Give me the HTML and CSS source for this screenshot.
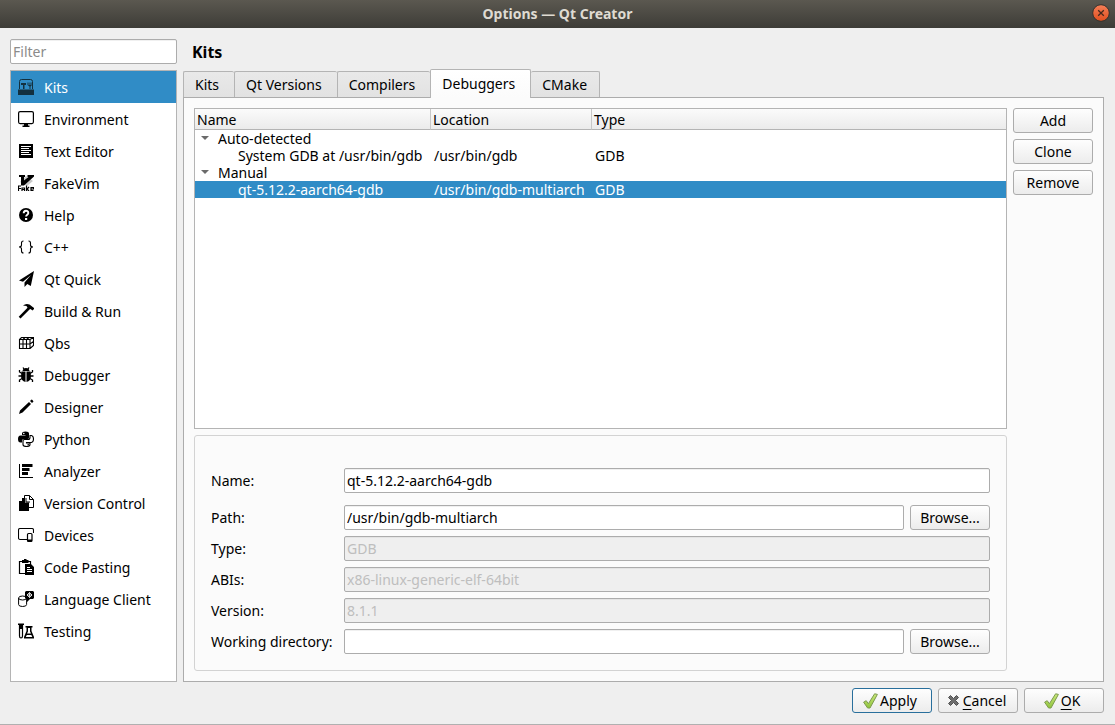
FILE: index.html
```html
<!DOCTYPE html>
<html lang="en">
<head>
<meta charset="utf-8">
<title>Options — Qt Creator</title>
<link rel="stylesheet" href="styles.css">
</head>
<body>
<header class="titlebar">
  <h1 class="titlebar-text">Options — Qt Creator</h1>
  <button class="close" type="button" aria-label="Close">
    <svg width="18" height="18" viewBox="0 0 18 18">
      <defs><linearGradient id="closeFill" x1="0" y1="0" x2="0" y2="1"><stop offset="0" stop-color="#f47f58"/><stop offset="1" stop-color="#e04e1e"/></linearGradient></defs>
      <circle cx="9" cy="9" r="8.300" fill="url(#closeFill)" stroke="#33322d"/>
      <path d="M6.200 6.200l5.600 5.600M11.800 6.200l-5.600 5.600" stroke="#46281c" stroke-width="1.300"/>
    </svg>
  </button>
</header>

<div class="dialog">
  <div class="content">
    <aside class="sidebar">
      <input class="field" type="text" placeholder="Filter" aria-label="Filter">
      <nav class="categories" aria-label="Categories">
        <button class="category selected" type="button">
          <svg class="icon" viewBox="0 0 16 16"><path d="M1.500 10V2.500q0-2 2-2h9q2 0 2 2V10" fill="none" stroke="#13303f"/><path d="M0 10.500h16V16H0zM3 4h5v2H6.500v4H5V6H3zM9.500 3.500h1V6h1V3.500h1V6h1V3.500h.5V6L12.500 7.500V10h-1V7.500L9.500 6z" fill="#13303f"/></svg>
          Kits</button>
        <button class="category" type="button">
          <svg class="icon" viewBox="0 0 16 16"><rect x=".6" y=".6" width="14.800" height="12" rx="1.500" fill="none" stroke="#000" stroke-width="1.200"/><path d="M6 13h4v1.500h1.500V16h-7v-1.500H6z"/></svg>
          Environment</button>
        <button class="category" type="button">
          <svg class="icon" viewBox="0 0 16 16"><path d="M1 1h14v14H1z"/><path d="M3 3.500h10M3 5.500h8M3 7.500h10M3 9.500h8M3 11.500h10" stroke="#fff"/></svg>
          Text Editor</button>
        <button class="category" type="button">
          <svg class="icon" viewBox="0 0 16 16"><path d="M8 1l7 5-6 5-7-4z" fill="#c9c9c9"/><path d="M1 0h6v2H6v3.500L10.500 2H9.500V0H16v1.500L6 10.500H3V2H1z"/><path d="M.5 16v-5H3M.5 13.500H3M4 16v-3h2.500v3M4 14.500h2.500M8.500 10.500V16M11 12l-2 2 2 2M15.500 15.500H13v-3h2.500V14H13" fill="none" stroke="#000" stroke-width="1.200"/></svg>
          FakeVim</button>
        <button class="category" type="button">
          <svg class="icon" viewBox="0 0 16 16"><circle cx="8" cy="8" r="7"/><path d="M5.700 6.200C5.700 3 10.300 3 10.300 6c0 1.700-2.200 1.700-2.200 3.600" fill="none" stroke="#fff" stroke-width="1.900"/><path d="M7 11h2.200v2H7z" fill="#fff"/></svg>
          Help</button>
        <button class="category" type="button">
          <svg class="icon" viewBox="0 0 16 16"><path d="M5.500 2Q3.500 2 3.500 4v2Q3.500 8 1 8q2.500 0 2.500 2v2q0 2 2 2M10.500 2q2 0 2 2v2q0 2 2.500 2-2.500 0-2.500 2v2q0 2-2 2" fill="none" stroke="#000" stroke-width="1.100"/></svg>
          C++</button>
        <button class="category" type="button">
          <svg class="icon" viewBox="0 0 16 16"><path d="M16 0L1 9.500l4 1.300L13 4 6.500 11.500V16l2.800-3 3.500 2z"/></svg>
          Qt Quick</button>
        <button class="category" type="button">
          <svg class="icon" viewBox="0 0 16 16"><path d="M5 2.500Q8 0 11.500 1.500L16 5v1l-1.500 1.500L12.500 6l-1 .500L2.500 15.500.7 13.700 9.500 4.700 8.500 3z"/></svg>
          Build &amp; Run</button>
        <button class="category" type="button">
          <svg class="icon" viewBox="0 0 16 16"><path d="M1.500 4.500H12v9H1.500zM1.500 4.500l2-2h12L12 4.500M15.500 2.500v8L12 13.500M5 4.500v9M8.500 4.500v9M1.500 9H12l3.500-2.500M5 4.500l2-2M8.500 4.500l2.500-2" fill="none" stroke="#000" stroke-width="1.100"/></svg>
          Qbs</button>
        <button class="category" type="button">
          <svg class="icon" viewBox="0 0 16 16"><path d="M4.500 4Q5 1 8 1t3.500 3zM3.500 4.500h4V15Q3 14 3 9zM8.500 4.500h4L13 9q0 5-4.500 6z"/><path d="M4 6.500L1.500 5V3M3.500 9H.5M4 11.500L1.500 13v2M12 6.500L14.500 5V3M12.500 9h3M12 11.500l2.500 1.500v2M6 2L5 .500M10 2l1-1.500" fill="none" stroke="#000" stroke-width="1.300"/></svg>
          Debugger</button>
        <button class="category" type="button">
          <svg class="icon" viewBox="0 0 16 16"><path d="M1 15l1-3.500L11 3l2 2-8.500 8.500zM12 2l1.500-1.500q1 0 2 2L14 4z"/></svg>
          Designer</button>
        <button class="category" type="button">
          <svg class="icon" viewBox="0 0 16 16"><path d="M4 4V2.500Q4 .5 7.500.5T11 2.500v4Q11 8 9.500 8H6Q4 8 4 10v1.500H2.500Q0 11.500 0 8t2.500-3.500h5V4z"/><path d="M12 4.500h1.500Q15.500 5 15.500 8t-2 3.500H8.500V12H12v1.500q0 2-3.500 2T5 13.500V10q0-1.500 1.500-1.500H10q2 0 2-2z" fill="#fff" stroke="#000" stroke-width="1.100"/><circle cx="5.800" cy="2.500" r=".8" fill="#fff"/><circle cx="10.200" cy="13.700" r=".8"/></svg>
          Python</button>
        <button class="category" type="button">
          <svg class="icon" viewBox="0 0 16 16"><path d="M1 1h1v13h13v1H1zM4 1h10.500v3H4zM4 5h7.500v3H4zM4 9h6v3H4z"/></svg>
          Analyzer</button>
        <button class="category" type="button">
          <svg class="icon" viewBox="0 0 16 16"><path d="M6.500.5h5l4 4v8h-9z" fill="#fff" stroke="#000"/><path d="M11.500.5v4h4" fill="none" stroke="#000"/><path d="M4 3h3v4.500h4V16H1V6h3z"/><path d="M8 3v4h4" fill="none" stroke="#000"/></svg>
          Version Control</button>
        <button class="category" type="button">
          <svg class="icon" viewBox="0 0 16 16"><path d="M9 12.500H2q-1.500 0-1.500-1.500V3Q.5 1.500 2 1.500h12q1.500 0 1.500 1.500v3" fill="none" stroke="#000" stroke-width="1.100"/><rect x="9.500" y="6.500" width="4.500" height="8" rx="1" fill="#fff" stroke="#000" stroke-width="1.200"/><path d="M9.500 12.500H14v2H9.500z"/></svg>
          Devices</button>
        <button class="category" type="button">
          <svg class="icon" viewBox="0 0 16 16"><path d="M7 14.500H1.500v-12h11V5" fill="none" stroke="#000" stroke-width="1.200"/><path d="M4 1h2V0h2.500v1h2v3H4zM7 5h6l3 3v8H7z"/><path d="M9 8.500h3M9 10.500h5M9 12.500h5" stroke="#fff"/></svg>
          Code Pasting</button>
        <button class="category" type="button">
          <svg class="icon" viewBox="0 0 16 16"><path d="M.6 7v6.500q0 2 4 2t4-2V7" fill="none" stroke="#000"/><ellipse cx="4.600" cy="7" rx="4" ry="2" fill="none" stroke="#000"/><path d="M8 0h7l1 1v6l-1 1h-3l-3 3V8H8L7 7V1z"/><path d="M11.500 1.500L14 4l-2.500 2.500L9 4zM9 4h5M11.500 1.500v5" fill="none" stroke="#fff" stroke-width=".8"/></svg>
          Language Client</button>
        <button class="category" type="button">
          <svg class="icon" viewBox="0 0 16 16"><path d="M0 .5h6V2H0z"/><path d="M1.500 1v12q0 2 1.500 2t1.500-2V1" fill="#fff" stroke="#000" stroke-width="1.200"/><path d="M1.500 1h3v5h-3zM7.500 3h7v1.500h-1V8l2.500 6v1.500H6V14l2.500-6V4.500h-1z"/><path d="M10 5h2v3.500l1 2H9l1-2zM7.800 14l1-2h4.500l1 2z" fill="#fff"/></svg>
          Testing</button>
      </nav>
    </aside>

    <main class="page">
      <h2 class="page-title">Kits</h2>
      <div class="tabs" role="tablist">
        <button class="tab" type="button" role="tab">Kits</button>
        <button class="tab" type="button" role="tab">Qt Versions</button>
        <button class="tab" type="button" role="tab">Compilers</button>
        <button class="tab active" type="button" role="tab" aria-selected="true">Debuggers</button>
        <button class="tab" type="button" role="tab">CMake</button>
      </div>
      <section class="pane">
        <div class="details">
          <div class="tree">
            <table class="tree-table">
              <colgroup><col class="col-name"><col class="col-location"><col></colgroup>
              <thead><tr><th>Name</th><th>Location</th><th>Type</th></tr></thead>
              <tbody>
                <tr><td class="parent" colspan="3"><button class="toggle" type="button" aria-label="Collapse Auto-detected"></button>Auto-detected</td></tr>
                <tr><td class="child">System GDB at /usr/bin/gdb</td><td>/usr/bin/gdb</td><td>GDB</td></tr>
                <tr><td class="parent" colspan="3"><button class="toggle" type="button" aria-label="Collapse Manual"></button>Manual</td></tr>
                <tr class="current"><td class="child">qt-5.12.2-aarch64-gdb</td><td>/usr/bin/gdb-multiarch</td><td>GDB</td></tr>
              </tbody>
            </table>
          </div>
          <form class="group">
            <div class="row spaced"><label for="name">Name:</label><input class="field" id="name" type="text" value="qt-5.12.2-aarch64-gdb"></div>
            <div class="row"><label for="path">Path:</label><input class="field" id="path" type="text" value="/usr/bin/gdb-multiarch"><button class="button" type="button">Browse...</button></div>
            <div class="row"><label for="type">Type:</label><input class="field" id="type" type="text" value="GDB" disabled></div>
            <div class="row"><label for="abis">ABIs:</label><input class="field" id="abis" type="text" value="x86-linux-generic-elf-64bit" disabled></div>
            <div class="row"><label for="version">Version:</label><input class="field" id="version" type="text" value="8.1.1" disabled></div>
            <div class="row"><label for="workdir">Working directory:</label><input class="field" id="workdir" type="text"><button class="button" type="button">Browse...</button></div>
          </form>
        </div>
        <div class="actions">
          <button class="button" type="button">Add</button>
          <button class="button" type="button">Clone</button>
          <button class="button" type="button">Remove</button>
        </div>
      </section>
    </main>
  </div>

  <footer class="footer">
    <button class="button default" type="button">
      <svg class="icon" viewBox="0 0 16 16"><defs><linearGradient id="tick" x1="0" y1="0" x2="0" y2="1"><stop offset="0" stop-color="#cbe87c"/><stop offset="1" stop-color="#8fc43c"/></linearGradient></defs><path d="M.6 9.200l2.600-1.500 2.200 3L11.600.8l2.800.6L7 15H4.600z" fill="url(#tick)" stroke="#7c9a4e"/></svg>
      <span>Apply</span></button>
    <button class="button" type="button">
      <svg class="icon" viewBox="0 0 16 16"><path d="M2.500 4.500L4.500 2.500l3 3 3-3 2 2-3 3 3 3-2 2-3-3-3 3-2-2 3-3z" fill="#6e6e6e" stroke="#505050"/></svg>
      <span><u>C</u>ancel</span></button>
    <button class="button" type="button">
      <svg class="icon" viewBox="0 0 16 16"><path d="M.6 9.200l2.600-1.500 2.200 3L11.600.8l2.800.6L7 15H4.600z" fill="url(#tick)" stroke="#7c9a4e"/></svg>
      <span><u>O</u>K</span></button>
  </footer>
</div>
</body>
</html>
```
FILE: styles.css
```css
* { box-sizing: border-box; }

body {
  margin: 0;
  min-height: 100vh;
  display: flex;
  flex-direction: column;
  background: #efefef;
  color: #000;
  font: 14px/17px "Noto Sans", sans-serif;
}

button, input { font: inherit; color: inherit; }
button { margin: 0; }

.titlebar {
  display: grid;
  grid-template-columns: 23px 1fr 23px;
  align-items: center;
  height: 28px;
  background: linear-gradient(#5b5850, #3d3c37);
}
.titlebar-text {
  grid-column: 2;
  margin: 0;
  padding-bottom: 2px;
  text-align: center;
  font-size: 14px;
  font-weight: 700;
  color: #dfdbd2;
}
.close {
  width: 18px;
  height: 18px;
  margin-bottom: 2px;
  padding: 0;
  border: 0;
  background: none;
}
.close svg { display: block; }

.dialog {
  flex: 1;
  display: flex;
  flex-direction: column;
  gap: 6px;
  padding: 11px 11px 11px 10px;
  border-bottom: 1px solid #b0b0b0;
}
.content { flex: 1; display: flex; gap: 6px; }

.sidebar {
  width: 167px;
  display: flex;
  flex-direction: column;
  gap: 6px;
}
.categories {
  flex: 1;
  display: flex;
  flex-direction: column;
  border: 1px solid #b4b4b4;
  background: #fff;
}
.category {
  display: flex;
  align-items: center;
  gap: 10px;
  height: 32px;
  padding: 0 7px;
  border: 0;
  background: none;
  text-align: left;
  white-space: nowrap;
}
.category.selected { background: #308cc6; color: #fff; }
.icon { flex: none; width: 16px; height: 16px; }

.field {
  width: 100%;
  min-width: 0;
  height: 25px;
  padding: 0 2px;
  border: 1px solid #acacac;
  border-radius: 2px;
  background: #fff;
  box-shadow: inset 0 1px #f0f0f0;
}
.field::placeholder { color: #8b8b8b; }
.field:disabled { background: #efefef; color: #bebebe; box-shadow: inset 0 1px #e4e4e4; }

.button {
  flex: none;
  display: flex;
  align-items: center;
  justify-content: center;
  gap: 1px;
  width: 80px;
  height: 25px;
  padding: 0;
  border: 1px solid #acacac;
  border-radius: 3px;
  background: linear-gradient(#fefefe, #ececec);
}
.button.default { border-color: #296f9c; }
.button u { text-underline-offset: 3px; text-decoration-skip-ink: none; }

.page { flex: 1; min-width: 0; display: flex; flex-direction: column; }
.page-title { margin: 0; padding: 3px 9px 6px; font-size: 16px; line-height: 21px; }

.tabs { display: flex; align-items: flex-end; }
.tab {
  height: 26px;
  padding: 0 15px 0 11px;
  border: 1px solid #b4b4b4;
  border-bottom: 0;
  border-right: 0;
  border-radius: 2px 2px 0 0;
  background: linear-gradient(#e9e9e9, #e2e2e2);
}
.tab:last-child { padding-right: 12px; border-right: 1px solid #b4b4b4; }
.tab.active {
  z-index: 1;
  height: 29px;
  margin-bottom: -1px;
  padding-bottom: 1px;
  border-right: 1px solid #b4b4b4;
  background: linear-gradient(#fff, #fbfbfb);
}
.tab.active + .tab { border-left: 0; }

.pane {
  flex: 1;
  display: flex;
  gap: 6px;
  padding: 10px;
  border: 1px solid #acacac;
  background: #fbfbfb;
}
.details { flex: 1; min-width: 0; display: flex; flex-direction: column; gap: 6px; }
.actions { display: flex; flex-direction: column; gap: 6px; }

.tree { flex: 1; border: 1px solid #b4b4b4; background: #fff; }
.tree-table { width: 100%; table-layout: fixed; border-collapse: separate; border-spacing: 0; }
.col-name { width: 236px; }
.col-location { width: 161px; }
.tree-table th {
  height: 21px;
  padding: 0 2px;
  border-right: 1px solid #c8c8c8;
  border-bottom: 1px solid #b4b4b4;
  background: linear-gradient(#fbfbfb, #ebebeb);
  font-weight: normal;
  text-align: left;
}
.tree-table th:last-child { border-right: 0; }
.tree-table td { height: 17px; padding: 0 3px; white-space: nowrap; }
.tree-table .parent { padding-left: 5px; }
.tree-table .child { padding: 0 0 0 43px; }
.current { background: #308cc6; color: #fff; }
.toggle {
  width: 10px;
  height: 8px;
  margin-right: 8px;
  padding: 0;
  border: 0;
  background: #6b6b6b;
  clip-path: polygon(10% 0, 90% 0, 50% 50%);
}

.group {
  display: flex;
  flex-direction: column;
  gap: 6px;
  padding: 32px 16px 16px;
  border: 1px solid #d3d3d3;
  border-radius: 3px;
}
.row { display: grid; grid-template-columns: 127px 1fr auto; gap: 6px; align-items: center; }
.row.spaced { margin-bottom: 6px; }
.row .field:last-child { grid-column: 2 / 4; }
.row label { white-space: nowrap; }

.footer { display: flex; justify-content: flex-end; gap: 6px; }
.footer .button { padding-right: 4px; }
```
